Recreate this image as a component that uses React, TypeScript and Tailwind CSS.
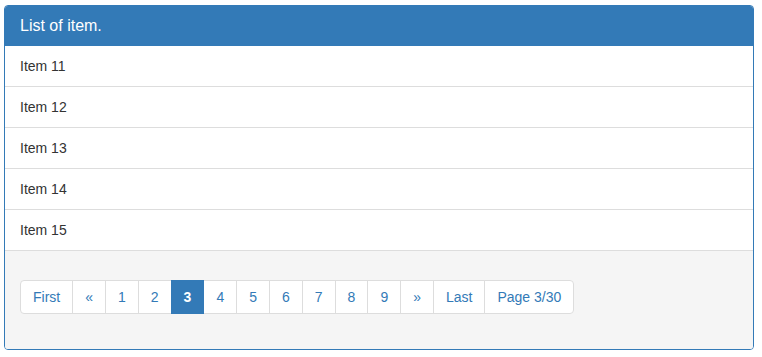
const items = ["Item 11", "Item 12", "Item 13", "Item 14", "Item 15"];

const pages = ["First", "«", "1", "2", "3", "4", "5", "6", "7", "8", "9", "»", "Last", "Page 3/30"];

export default function App() {
  return (
    <div className="min-h-[357px] bg-white pt-[5px] pl-[4px] font-['Liberation_Sans',Arial,sans-serif]">
      <div className="w-[750px] overflow-hidden rounded-[4px] border border-[#337ab7] bg-white">
        {/* heading */}
        <div className="h-[40px] bg-[#337ab7] px-[15px] text-[16px] leading-[39px] text-white">
          List of item.
        </div>

        {/* list */}
        <ul>
          {items.map((item) => (
            <li
              key={item}
              className="h-[41px] border-b border-[#ddd] px-[15px] text-[14px] leading-[41px] text-[#333]"
            >
              {item}
            </li>
          ))}
        </ul>

        {/* footer */}
        <div className="bg-[#f5f5f5] px-[15px] pt-[29px] pb-[35px]">
          <ul className="flex">
            {pages.map((p, i) => {
              const active = p === "3";
              return (
                <li
                  key={p}
                  className={`h-[34px] border px-[12px] text-[14px] leading-[32px] ${
                    i > 0 ? "-ml-px" : ""
                  } ${i === 0 ? "rounded-l-[4px]" : ""} ${
                    i === pages.length - 1 ? "rounded-r-[4px]" : ""
                  } ${
                    active
                      ? "relative z-10 border-[#337ab7] bg-[#337ab7] font-bold text-white"
                      : "border-[#ddd] bg-white text-[#337ab7]"
                  }`}
                >
                  {p}
                </li>
              );
            })}
          </ul>
        </div>
      </div>
    </div>
  );
}
